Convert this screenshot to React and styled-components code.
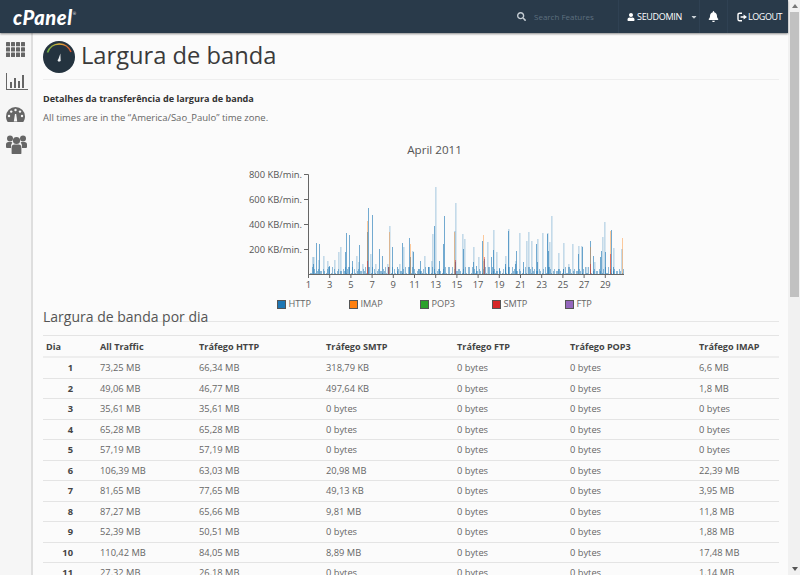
import React from 'react';
import styled, { createGlobalStyle } from 'styled-components';
import { FaUser, FaBell, FaSearch, FaCaretDown } from 'react-icons/fa';

const GlobalStyle = createGlobalStyle`
    html, body {
        margin: 0;
        height: 100%;
        overflow: hidden;
        background: #fafafa;
        font-family: "Open Sans", "Liberation Sans", sans-serif;
    }
`;

const BLUE = '#1f77b4';
const ORANGE = '#ff7f0e';
const RED = '#d62728';

// [x px from chart origin (day 1), height in px]
const lightBars = [
    [4, 17], [5, 17], [10, 14], [15, 18], [19, 13], [26, 14], [30, 22], [32, 27], [48, 18], [50, 12], [54, 10], [62, 20],
    [67, 10], [79, 10], [81, 48], [91, 10], [95, 27], [104, 23], [110, 5], [116, 18], [123, 13], [124, 40], [127, 87],
    [147, 71], [146, 43], [154, 40], [156, 35], [165, 27], [170, 17], [175, 13], [179, 32], [185, 44], [188, 22], [197, 18], [200, 45],
    [207, 13], [211, 41], [218, 33], [220, 42], [223, 33], [229, 35], [234, 41], [239, 41], [243, 58], [241, 32], [250, 21], [255, 31],
    [260, 10], [264, 30], [270, 28], [273, 28], [278, 7], [286, 12], [294, 37], [296, 52], [305, 26], [313, 25], [317, 10],
];

const darkBars = [
    [5, 10], [8, 31], [11, 30], [21, 8], [37, 22], [38, 41], [41, 39], [44, 13], [51, 29], [59, 42], [60, 66], [64, 59],
    [71, 25], [74, 18], [80, 7], [84, 27], [89, 7], [94, 31], [101, 36], [102, 17], [105, 22], [112, 13], [120, 7], [126, 48],
    [131, 13], [135, 30], [136, 58],
    [147, 12], [155, 25], [165, 12], [168, 8], [174, 33], [176, 15], [183, 17], [185, 24], [191, 6], [197, 10], [200, 43], [208, 23],
    [207, 10], [215, 12], [228, 30], [229, 12], [239, 40], [240, 23], [250, 5], [255, 5], [270, 20], [274, 27], [282, 33],
    [285, 18], [292, 17], [293, 23], [297, 22], [303, 44], [305, 7], [316, 5],
];

const orangeBars = [[59, 53], [81, 42], [102, 30], [146, 42], [175, 39], [282, 27], [302, 43], [314, 36]];
const redBars = [[59, 13], [80, 7], [147, 14], [176, 17], [282, 10], [302, 20]];

// low noise along the base line
const noise = Array.from({ length: 230 }, (_, i) => [
    2 + ((i * 37) % 316),
    1 + ((i * i * 13 + i * 7) % 8),
]);

const days = Array.from({ length: 15 }, (_, i) => 1 + i * 2);
const ticks = [800, 600, 400, 200];

const legend = [
    { label: 'HTTP', color: BLUE, width: 72 },
    { label: 'IMAP', color: ORANGE, width: 71 },
    { label: 'POP3', color: '#2ca02c', width: 72 },
    { label: 'SMTP', color: RED, width: 73 },
    { label: 'FTP', color: '#9467bd', width: 40 },
];

const rows = [
    [1, '73,25 MB', '66,34 MB', '318,79 KB', '0 bytes', '0 bytes', '6,6 MB'],
    [2, '49,06 MB', '46,77 MB', '497,64 KB', '0 bytes', '0 bytes', '1,8 MB'],
    [3, '35,61 MB', '35,61 MB', '0 bytes', '0 bytes', '0 bytes', '0 bytes'],
    [4, '65,28 MB', '65,28 MB', '0 bytes', '0 bytes', '0 bytes', '0 bytes'],
    [5, '57,19 MB', '57,19 MB', '0 bytes', '0 bytes', '0 bytes', '0 bytes'],
    [6, '106,39 MB', '63,03 MB', '20,98 MB', '0 bytes', '0 bytes', '22,39 MB'],
    [7, '81,65 MB', '77,65 MB', '49,13 KB', '0 bytes', '0 bytes', '3,95 MB'],
    [8, '87,27 MB', '65,66 MB', '9,81 MB', '0 bytes', '0 bytes', '11,8 MB'],
    [9, '52,39 MB', '50,51 MB', '0 bytes', '0 bytes', '0 bytes', '1,88 MB'],
    [10, '110,42 MB', '84,05 MB', '8,89 MB', '0 bytes', '0 bytes', '17,48 MB'],
    [11, '27,32 MB', '26,18 MB', '0 bytes', '0 bytes', '0 bytes', '1,14 MB'],
];

const headers = ['Dia', 'All Traffic', 'Tráfego HTTP', 'Tráfego SMTP', 'Tráfego FTP', 'Tráfego POP3', 'Tráfego IMAP'];

function Bars({ data, color, opacity, width = 1 }) {
    return data.map(([x, h], i) => (
        <rect key={i} x={x} y={100 - h} width={width} height={h} fill={color} opacity={opacity} />
    ));
}

function BandwidthChart() {
    return (
        <ChartSvg viewBox="0 0 400 126" width="400" height="126">
            <g transform="translate(84 6)">
                <Bars data={lightBars} color={BLUE} opacity={0.25} width={1.6} />
                <Bars data={noise} color={BLUE} opacity={0.5} />
                <Bars data={darkBars} color={BLUE} opacity={0.62} />
                <Bars data={orangeBars} color={ORANGE} opacity={0.4} />
                <Bars data={redBars} color={RED} opacity={0.5} />
                <path d="M-4 0.5H0.5V100.5H318.5V103M-4 25.5H0.5M-4 50.5H0.5M-4 75.5H0.5" fill="none" stroke="#666" strokeWidth="1" />
                {days.map((d, i) => (
                    <g key={d}>
                        <line x1={0.5 + i * 21.2} x2={0.5 + i * 21.2} y1="100" y2="104" stroke="#666" />
                        <AxisText x={0.5 + i * 21.2} y="114" textAnchor="middle">{d}</AxisText>
                    </g>
                ))}
                {ticks.map((t, i) => (
                    <AxisText key={t} x="-6" y={4 + i * 25} textAnchor="end">{t} KB/min.</AxisText>
                ))}
            </g>
        </ChartSvg>
    );
}

function Gauge() {
    return (
        <svg width="32" height="32" viewBox="0 0 32 32">
            <defs>
                <linearGradient id="arc" x1="0" x2="1" y1="0" y2="0">
                    <stop offset="0" stopColor="#6fae45" />
                    <stop offset="0.5" stopColor="#e3b23c" />
                    <stop offset="1" stopColor="#d4502a" />
                </linearGradient>
            </defs>
            <circle cx="16" cy="16" r="16" fill="#24333f" />
            <path d="M4.5 11.5A12.5 12.5 0 0 1 28 11" fill="none" stroke="url(#arc)" strokeWidth="1.6" />
            <path d="M17.4 12.5L17.6 18.5A1.6 1.6 0 0 1 17 20.5H15.2A1.6 1.6 0 0 1 15.4 18Z" fill="#eef1f3" />
        </svg>
    );
}

function LogoutIcon() {
    return (
        <svg width="11" height="10" viewBox="0 0 11 10">
            <path d="M5 1.2H2.6Q1 1.2 1 2.8V7.2Q1 8.8 2.6 8.8H5" fill="none" stroke="#fff" strokeWidth="1.4" />
            <path d="M3.6 4.2H6.6V2.4L10 5L6.6 7.6V5.8H3.6Z" fill="#fff" />
        </svg>
    );
}

function GridIcon() {
    const cells = [];
    for (let r = 0; r < 3; r++) {
        for (let c = 0; c < 4; c++) {
            cells.push(<rect key={`${r}-${c}`} x={c * 5} y={r * 5.3} width="4" height="4.3" rx="0.5" />);
        }
    }
    return <svg width="19" height="15" viewBox="0 0 19 15" fill="currentColor">{cells}</svg>;
}

function StatsIcon() {
    return (
        <svg width="22" height="17" viewBox="0 0 22 17" fill="currentColor">
            <path d="M0 0H1V16H22V17H0Z" />
            <rect x="4" y="9" width="2" height="6" />
            <rect x="8" y="5" width="2" height="10" />
            <rect x="12" y="8" width="2" height="7" />
            <rect x="16" y="2" width="2" height="13" />
        </svg>
    );
}

function DashIcon() {
    return (
        <svg width="19" height="15" viewBox="0 0 19 15">
            <path d="M9.5 0A9.5 9.5 0 0 1 19 9.5C19 11.5 18.3 13.4 17.3 15H1.7C0.7 13.4 0 11.5 0 9.5A9.5 9.5 0 0 1 9.5 0Z" fill="currentColor" />
            <g fill="#f6f6f6">
                <circle cx="3" cy="9" r="1.2" />
                <circle cx="5.2" cy="4.6" r="1.2" />
                <circle cx="9.5" cy="3" r="1.2" />
                <circle cx="14" cy="4.6" r="1.2" />
                <circle cx="16" cy="9" r="1.2" />
                <path d="M7.8 14.5L9 7H10.2L11.2 14.5Z" />
            </g>
        </svg>
    );
}

function PeopleIcon() {
    return (
        <svg width="21" height="19" viewBox="0 0 21 19" fill="currentColor">
            <circle cx="4" cy="3.4" r="3" />
            <circle cx="17" cy="3.4" r="3" />
            <path d="M0 12V9.5Q0 7 2.5 7H5.5Q6 7 6.3 7.4Q5 9 5 11V13H1Q0 13 0 12Z" />
            <path d="M21 12V9.5Q21 7 18.5 7H15.5Q15 7 14.7 7.4Q16 9 16 11V13H20Q21 13 21 12Z" />
            <circle cx="10.5" cy="5.5" r="3.6" />
            <path d="M6 19Q5.6 19 5.6 18V12.5Q5.6 9.6 8.4 9.6H12.6Q15.4 9.6 15.4 12.5V18Q15.4 19 15 19Z" />
        </svg>
    );
}

const sideItems = [
    { Icon: GridIcon, height: 32 },
    { Icon: StatsIcon, height: 33 },
    { Icon: DashIcon, height: 33 },
    { Icon: PeopleIcon, height: 27 },
];

export default function App() {
    return (
        <>
            <GlobalStyle />
            <Screen>
                <Page>
                    <TopBar>
                        <Logo>cPanel<sup>®</sup></Logo>
                        <SearchBox>
                            <FaSearch size={9} />
                            <span>Search Features</span>
                        </SearchBox>
                        <UserMenu>
                            <FaUser size={8} />
                            <span>SEUDOMIN</span>
                            <FaCaretDown size={8} />
                        </UserMenu>
                        <BellBox><FaBell size={11} /></BellBox>
                        <LogoutBox><LogoutIcon /><span>LOGOUT</span></LogoutBox>
                    </TopBar>
                    <Body>
                        <Sidebar>
                            {sideItems.map(({ Icon, height }, i) => (
                                <SideItem key={i} $height={height}><Icon /></SideItem>
                            ))}
                        </Sidebar>
                        <Main>
                            <TitleRow>
                                <Gauge />
                                <Title>Largura de banda</Title>
                            </TitleRow>
                            <SubTitle>Detalhes da transferência de largura de banda</SubTitle>
                            <Note>All times are in the “America/Sao_Paulo” time zone.</Note>
                            <ChartBlock>
                                <ChartTitle>April 2011</ChartTitle>
                                <BandwidthChart />
                                <Legend>
                                    {legend.map((item) => (
                                        <LegendItem key={item.label} $width={item.width}>
                                            <Swatch $color={item.color} />
                                            {item.label}
                                        </LegendItem>
                                    ))}
                                </Legend>
                            </ChartBlock>
                            <SectionTitle>Largura de banda por dia</SectionTitle>
                            <Table>
                                <colgroup>
                                    <col width="57" /><col width="99" /><col width="127" /><col width="131" />
                                    <col width="113" /><col width="129" /><col />
                                </colgroup>
                                <thead>
                                    <tr>{headers.map((h) => <Th key={h}>{h}</Th>)}</tr>
                                </thead>
                                <tbody>
                                    {rows.map(([day, ...cells]) => (
                                        <tr key={day}>
                                            <DayCell>{day}</DayCell>
                                            {cells.map((c, i) => <Td key={i}>{c}</Td>)}
                                        </tr>
                                    ))}
                                </tbody>
                            </Table>
                        </Main>
                    </Body>
                </Page>
                <ScrollBar>
                    <Arrow $up />
                    <Thumb />
                    <Arrow />
                </ScrollBar>
            </Screen>
        </>
    );
}

const Screen = styled.div`
    display: flex;
    width: 800px;
    height: 575px;
    overflow: hidden;
`;

const Page = styled.div`
    flex: 1;
    min-width: 0;
    display: flex;
    flex-direction: column;
`;

const TopBar = styled.header`
    flex: none;
    height: 33px;
    display: flex;
    align-items: center;
    background: #293a4a;
    color: #fff;
    box-shadow: 0 1px 2px rgba(0, 0, 0, 0.45);
    position: relative;
    z-index: 2;
`;

const Logo = styled.div`
    margin-left: 13px;
    margin-right: auto;
    font: italic 900 20px "Lato", sans-serif;
    letter-spacing: 0.6px;
    color: #fff;

    sup {
        font-size: 4px;
        font-weight: 400;
        vertical-align: 10px;
        line-height: 0;
    }
`;

const SearchBox = styled.div`
    width: 116px;
    height: 33px;
    display: flex;
    align-items: center;
    gap: 8px;
    padding-left: 14px;
    box-sizing: border-box;
    font-size: 8px;
    color: #5d6f7f;
    border-right: 1px solid #2f4153;

    svg {
        color: #c4ccd3;
    }
`;

const UserMenu = styled.div`
    width: 81px;
    height: 33px;
    display: flex;
    align-items: center;
    gap: 2px;
    padding-left: 8px;
    box-sizing: border-box;
    font-size: 9px;
    letter-spacing: -0.3px;
    border-right: 1px solid #2f4153;

    svg:last-child {
        margin-left: 6px;
        color: #c9d0d6;
    }
`;

const BellBox = styled.div`
    width: 28px;
    height: 33px;
    display: flex;
    align-items: center;
    justify-content: center;
    box-sizing: border-box;
    border-right: 1px solid #2f4153;
`;

const LogoutBox = styled.div`
    width: 60px;
    height: 33px;
    display: flex;
    align-items: center;
    padding-left: 9px;
    box-sizing: border-box;
    font-size: 9px;
    letter-spacing: -0.45px;
`;

const Body = styled.div`
    flex: 1;
    min-height: 0;
    display: flex;
`;

const Sidebar = styled.nav`
    flex: none;
    width: 33px;
    box-sizing: border-box;
    display: flex;
    flex-direction: column;
    background: #f6f6f6;
    border-right: 2px solid #dedede;
    color: #666;
`;

const SideItem = styled.div`
    height: ${(p) => p.$height}px;
    display: flex;
    align-items: center;
    padding-left: 6px;
`;

const Main = styled.main`
    flex: 1;
    min-width: 0;
    padding: 8px 9px 0 10px;
    overflow: hidden;
    background: #fbfbfb;
`;

const TitleRow = styled.div`
    display: flex;
    align-items: center;
    gap: 6px;
    padding-bottom: 6px;
    border-bottom: 1px solid #eee;
`;

const Title = styled.h1`
    margin: 0 0 4px;
    font-size: 23.7px;
    font-weight: 400;
    line-height: 28px;
    color: #3a3a3a;
`;

const SubTitle = styled.div`
    margin-top: 12px;
    font-size: 9.1px;
    line-height: 13px;
    font-weight: 700;
    color: #333;
`;

const Note = styled.div`
    margin-top: 6px;
    font-size: 9.5px;
    line-height: 13px;
    color: #666;
`;

const ChartBlock = styled.div`
    margin-top: 18px;
    display: flex;
    flex-direction: column;
    align-items: center;
`;

const ChartTitle = styled.div`
    font-size: 11.6px;
    line-height: 16px;
    color: #555;
    margin-bottom: 10px;
    margin-left: 47px;
`;

const ChartSvg = styled.svg`
    display: block;
    margin-left: 26px;
`;

const AxisText = styled.text`
    font-size: 9.4px;
    fill: #555;
    font-family: "Open Sans", sans-serif;
`;

const Legend = styled.div`
    display: flex;
    margin-top: 4px;
    margin-left: 59px;
`;

const LegendItem = styled.div`
    width: ${(p) => p.$width}px;
    display: flex;
    align-items: center;
    gap: 3px;
    font-size: 9.2px;
    line-height: 12px;
    color: #666;
`;

const Swatch = styled.span`
    width: 7px;
    height: 7px;
    background: ${(p) => p.$color};
    border: 1px solid #555;
`;

const SectionTitle = styled.h2`
    margin: -1px 0 0;
    padding-top: 4px;
    font-size: 14px;
    line-height: 8px;
    font-weight: 400;
    color: #555;
    border-bottom: 1px solid #e6e6e6;
`;

const Table = styled.table`
    width: 736px;
    margin-top: 13px;
    border-collapse: collapse;
    table-layout: fixed;
    font-size: 9.3px;
    color: #666;
`;

const Th = styled.th`
    height: 20px;
    padding: 0;
    text-align: left;
    font-size: 9.1px;
    font-weight: 700;
    color: #444;
    border-top: 1px solid #e4e4e4;
    border-bottom: 2px solid #eee;

    &:first-child {
        padding-left: 3px;
    }
`;

const Td = styled.td`
    height: 19.5px;
    padding: 0;
    border-bottom: 1px solid #e4e4e4;
`;

const DayCell = styled(Td)`
    padding-right: 27px;
    text-align: right;
    font-weight: 700;
    color: #444;
`;

const ScrollBar = styled.div`
    flex: none;
    width: 12px;
    display: flex;
    flex-direction: column;
    background: #f1f1f1;
`;

const Thumb = styled.div`
    height: 285px;
    margin: 0 1px auto 2px;
    background: #c1c1c1;
`;

const Arrow = styled.div`
    height: 12px;
    flex: none;
    position: relative;

    &::after {
        content: '';
        position: absolute;
        left: 4px;
        top: 4px;
        border-left: 3px solid transparent;
        border-right: 3px solid transparent;
        ${(p) => (p.$up ? 'border-bottom: 4px solid #777;' : 'border-top: 4px solid #555;')}
    }
`;
